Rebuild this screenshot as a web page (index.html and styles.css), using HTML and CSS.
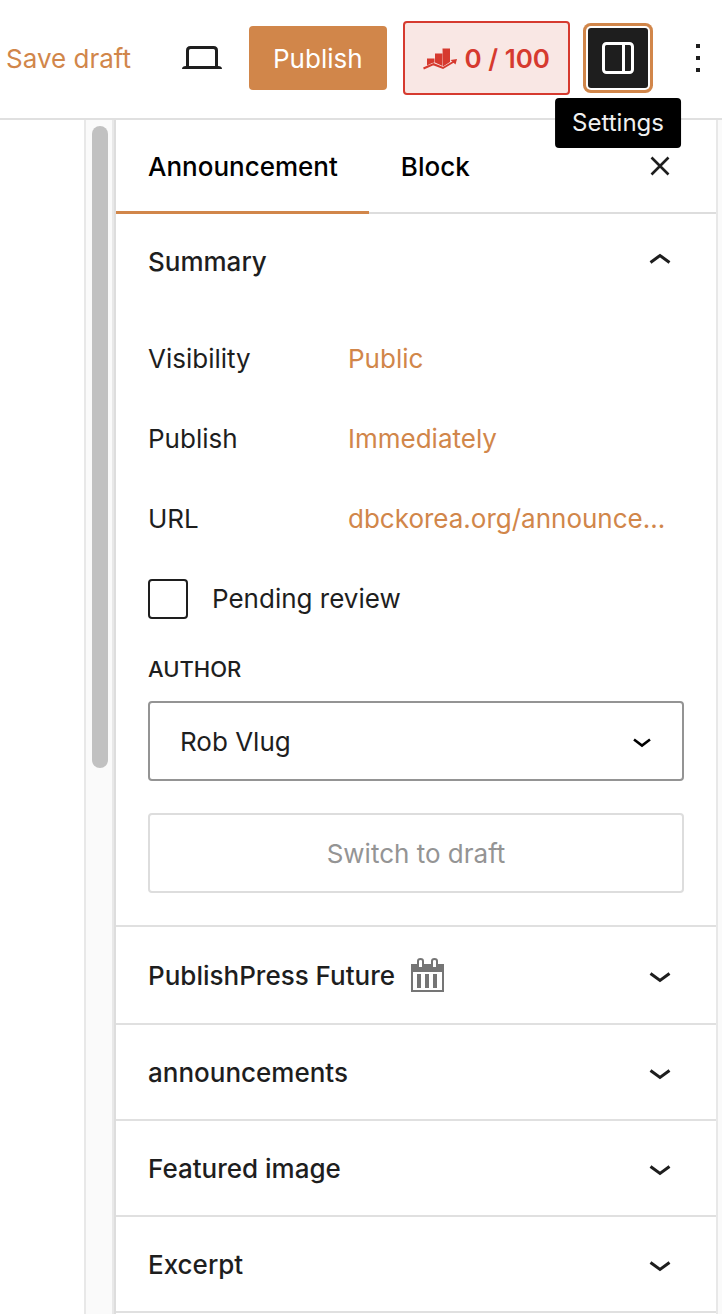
FILE: index.html
```html
<!DOCTYPE html>
<html lang="en">
<head>
<meta charset="utf-8">
<title>Edit Announcement</title>
<meta name="viewport" content="width=device-width, initial-scale=1">
<link rel="stylesheet" href="styles.css">
</head>
<body>
<header class="toolbar">
  <button class="save-draft" type="button">Save draft</button>
  <button class="icon-button preview" type="button" aria-label="Preview">
    <svg width="40" height="24" viewBox="0 0 40 24" aria-hidden="true"><path d="M5.500 21V4.500Q5.500 1.500 8.500 1.500H31.500Q34.500 1.500 34.500 4.500V21" fill="none" stroke="#1e1e1e" stroke-width="3"/><path d="M4 20H36Q40 20 40 23H0Q0 20 4 20Z" fill="#1e1e1e"/></svg>
  </button>
  <button class="publish" type="button">Publish</button>
  <button class="score" type="button">
    <svg width="34" height="22" viewBox="0 0 34 22" aria-hidden="true"><g fill="#d63a2f"><path d="M4 10.500H11.500V14.500L9 15L4 17.500Z"/><path d="M12 5.500H19.500V18L12 14.500Z"/><path d="M19.500 0.500H27V14L20 18.500Z"/><path d="M34 11L27.500 12L32.500 16.500Z"/></g><path d="M0.500 20.500L10.500 16.200L20 20L31 13.500" fill="none" stroke="#d63a2f" stroke-width="2"/></svg>
    <span>0 / 100</span>
  </button>
  <div class="settings-wrap">
    <button class="settings" type="button" aria-label="Settings" aria-describedby="settings-tip">
      <svg width="32" height="32" viewBox="0 0 32 32" fill="none" stroke="#fff" stroke-width="3" aria-hidden="true"><rect x="1.500" y="1.500" width="29" height="29" rx="3"/><path d="M21.500 2V30"/></svg>
    </button>
    <span class="tooltip" id="settings-tip" role="tooltip">Settings</span>
  </div>
  <button class="icon-button more" type="button" aria-label="Options">
    <svg width="4" height="28" viewBox="0 0 4 28" fill="#1e1e1e" aria-hidden="true"><path d="M0 0H4V4H0ZM0 12H4V16H0ZM0 24H4V28H0Z"/></svg>
  </button>
</header>
<div class="workspace">
  <main class="canvas"></main>
  <div class="scroll-track"><div class="scroll-thumb"></div></div>
  <aside class="sidebar" aria-label="Editor settings">
    <div class="tabs">
      <button class="tab active" type="button">Announcement</button>
      <button class="tab" type="button">Block</button>
      <button class="icon-button close" type="button" aria-label="Close settings">
        <svg width="20" height="20" viewBox="0 0 20 20" aria-hidden="true"><path d="M1.500 1.500L18.500 18.500M18.500 1.500L1.500 18.500" stroke="#1e1e1e" stroke-width="2.600"/></svg>
      </button>
    </div>
    <section class="panel">
      <button class="panel-title" type="button" aria-expanded="true"><span>Summary</span>
        <svg class="chevron raised" width="22" height="12" viewBox="0 0 22 12" aria-hidden="true"><path d="M1.500 9.500L11 2.500L20.500 9.500"/></svg>
      </button>
      <div class="panel-body">
        <dl class="facts">
          <div class="fact"><dt>Visibility</dt><dd><a href="#visibility">Public</a></dd></div>
          <div class="fact"><dt>Publish</dt><dd><a href="#schedule">Immediately</a></dd></div>
          <div class="fact"><dt>URL</dt><dd><a href="#url">dbckorea.org/announce...</a></dd></div>
        </dl>
        <label class="pending"><input class="checkbox" type="checkbox"><span>Pending review</span></label>
        <label class="field-label" for="author">Author</label>
        <div class="select-wrap">
          <select class="select" id="author"><option>Rob Vlug</option></select>
          <svg class="select-arrow" width="18" height="10" viewBox="0 0 18 10" aria-hidden="true"><path d="M1 1.500L9 7.500L17 1.500" fill="none" stroke="#000" stroke-width="2.600"/></svg>
        </div>
        <button class="switch-draft" type="button" disabled>Switch to draft</button>
      </div>
    </section>
    <section class="panel">
      <button class="panel-title" type="button" aria-expanded="false"><span>PublishPress Future</span>
        <svg width="34" height="34" viewBox="0 1 34 34" aria-hidden="true"><path fill="#757575" fill-rule="evenodd" d="M0 6H33V34H0ZM2 14V32H31V14Z"/><path fill="#757575" d="M6 16H10V30H6ZM14 16H18V30H14ZM22 16H26V30H22Z"/><g fill="#fff" stroke="#757575" stroke-width="2"><path d="M7 9V3Q7 1 9.500 1T12 3V9"/><path d="M21 9V3Q21 1 23.500 1T26 3V9"/></g></svg>
        <svg class="chevron" width="22" height="12" viewBox="0 -1 22 12" aria-hidden="true"><path d="M1.500 2.500L11 9.500L20.500 2.500"/></svg>
      </button>
    </section>
    <section class="panel">
      <button class="panel-title" type="button" aria-expanded="false"><span>announcements</span>
        <svg class="chevron" width="22" height="12" viewBox="0 -1 22 12" aria-hidden="true"><path d="M1.500 2.500L11 9.500L20.500 2.500"/></svg>
      </button>
    </section>
    <section class="panel">
      <button class="panel-title" type="button" aria-expanded="false"><span>Featured image</span>
        <svg class="chevron" width="22" height="12" viewBox="0 -1 22 12" aria-hidden="true"><path d="M1.500 2.500L11 9.500L20.500 2.500"/></svg>
      </button>
    </section>
    <section class="panel">
      <button class="panel-title" type="button" aria-expanded="false"><span>Excerpt</span>
        <svg class="chevron" width="22" height="12" viewBox="0 -1 22 12" aria-hidden="true"><path d="M1.500 2.500L11 9.500L20.500 2.500"/></svg>
      </button>
    </section>
  </aside>
  <div class="edge"></div>
</div>
</body>
</html>
```
FILE: styles.css
```css
* { box-sizing: border-box; }
body {
  margin: 0;
  min-height: 100vh;
  display: flex;
  flex-direction: column;
  background: #fff;
  color: #1e1e1e;
  font: 400 26px/32px Inter, "Liberation Sans", sans-serif;
}
button, select, input { font: inherit; color: inherit; margin: 0; }
button { background: none; border: 0; padding: 0; white-space: nowrap; }
svg { display: block; flex: none; overflow: visible; }
a { color: #d1864a; text-decoration: none; }

.toolbar {
  display: flex;
  align-items: center;
  justify-content: flex-end;
  padding: 21px 22px 23px 6px;
  border-bottom: 2px solid #e0e0e0;
}
.icon-button { display: flex; align-items: center; justify-content: center; }
.save-draft { padding-top: 2px; color: #d1864a; }
.preview { width: 72px; height: 64px; margin: 0 12px 0 36px; }
.publish {
  height: 64px;
  padding: 2px 24px 0;
  border-radius: 4px;
  background: #d1864a;
  color: #fff;
}
.score {
  display: flex;
  align-items: center;
  gap: 8px;
  height: 74px;
  margin: 0 18px 0 16px;
  padding: 2px 18px 0;
  border: 2px solid #d63a2f;
  border-radius: 4px;
  background: #f9e7e4;
  color: #d63a2f;
  font-weight: 600;
}
.settings-wrap { position: relative; }
.settings {
  display: flex;
  align-items: center;
  justify-content: center;
  width: 60px;
  height: 60px;
  border-radius: 3px;
  background: #1e1e1e;
  box-shadow: 0 0 0 2px #fff, 0 0 0 5px #d1864a;
}
.tooltip {
  position: absolute;
  top: 70px;
  left: 50%;
  transform: translateX(-50%);
  padding: 9px 17px;
  border-radius: 4px;
  background: #000;
  color: #f0f0f0;
  font-size: 24px;
}
.more { width: 4px; margin-left: 48px; }

.workspace { flex: 1; display: flex; }
.canvas { flex: 0 0 84px; }
.scroll-track {
  flex: none;
  width: 32px;
  padding: 6px 4px 0 6px;
  border-left: 2px solid #e8e8e8;
  border-right: 2px solid #ddd;
  background: linear-gradient(to left, #e8e8e8 2px, #fafafa 2px);
}
.scroll-thumb { width: 16px; height: 54%; border-radius: 8px; background: #c1c1c1; }
.sidebar { flex: 1; min-width: 0; }
.edge { flex: none; width: 6px; border-left: 2px solid #e8e8e8; background: #fafafa; }

.tabs { display: flex; border-bottom: 2px solid #ddd; }
.tab {
  height: 94px;
  margin-bottom: -2px;
  padding: 3px 31px 0 32px;
  border-bottom: 3px solid transparent;
  color: #000;
  font-weight: 500;
}
.active { border-bottom-color: #d1864a; }
.close { margin-left: auto; width: 48px; margin-right: 32px; }

.panel { border-bottom: 2px solid #e0e0e0; }
.panel-title {
  display: flex;
  align-items: center;
  gap: 16px;
  width: 100%;
  padding: 32px 45px 30px 32px;
  font-weight: 500;
  text-align: left;
}
.chevron { margin-left: auto; fill: none; stroke: #1e1e1e; stroke-width: 3; }
.raised { margin-bottom: 6px; }
.panel-body { padding: 11px 32px 32px; }
.facts { margin: 0; }
.fact { display: grid; grid-template-columns: 200px 1fr; align-items: center; min-height: 80px; }
.fact dd { margin: 0; min-width: 0; overflow: hidden; text-overflow: ellipsis; white-space: nowrap; }
.pending { display: flex; align-items: center; gap: 24px; padding: 20px 0 34px; }
.checkbox {
  appearance: none;
  width: 40px;
  height: 40px;
  border: 2px solid #1e1e1e;
  border-radius: 4px;
  background: #fff;
}
.field-label { display: block; margin-bottom: 16px; font-size: 22px; font-weight: 500; text-transform: uppercase; }
.select-wrap { position: relative; }
.select {
  appearance: none;
  display: block;
  width: 100%;
  height: 80px;
  padding: 2px 64px 0 30px;
  border: 2px solid #949494;
  border-radius: 4px;
  background: #fff;
}
.select-arrow { position: absolute; right: 33px; top: 37px; pointer-events: none; }
.switch-draft {
  width: 100%;
  height: 80px;
  margin-top: 32px;
  padding-top: 2px;
  border: 2px solid #ddd;
  border-radius: 4px;
  color: #949494;
}
```
